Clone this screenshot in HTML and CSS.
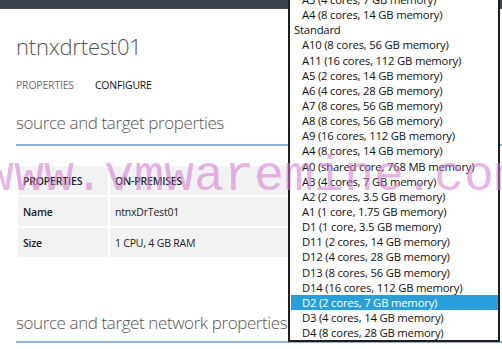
FILE: index.html
```html
<!DOCTYPE html>
<html lang="en">
<head>
  <meta charset="UTF-8" />
  <title>ntnxdrtest01</title>
  <link rel="stylesheet" href="styles.css">
</head>
<body>

  <div class="topbar"></div>

  <div class="page">
    <h1 class="title">ntnxdrtest01</h1>

    <div class="tabs">
      <span class="tab">PROPERTIES</span>
      <span class="tab active">CONFIGURE</span>
    </div>

    <h2 class="section">source and target properties</h2>

    <table class="props">
      <tr>
        <th class="col-name">PROPERTIES</th>
        <th>ON-PREMISES</th>
      </tr>
      <tr>
        <td class="col-name label">Name</td>
        <td>ntnxDrTest01</td>
      </tr>
      <tr>
        <td class="col-name label">Size</td>
        <td>1 CPU, 4 GB RAM</td>
      </tr>
    </table>

    <h2 class="section section-net">source and target network properties</h2>
  </div>

  <div class="dropdown">
    <div class="opt">A3 (4 cores, 7 GB memory)</div>
    <div class="opt">A4 (8 cores, 14 GB memory)</div>
    <div class="group">Standard</div>
    <div class="opt">A10 (8 cores, 56 GB memory)</div>
    <div class="opt">A11 (16 cores, 112 GB memory)</div>
    <div class="opt">A5 (2 cores, 14 GB memory)</div>
    <div class="opt">A6 (4 cores, 28 GB memory)</div>
    <div class="opt">A7 (8 cores, 56 GB memory)</div>
    <div class="opt">A8 (8 cores, 56 GB memory)</div>
    <div class="opt">A9 (16 cores, 112 GB memory)</div>
    <div class="opt">A4 (8 cores, 14 GB memory)</div>
    <div class="opt">A0 (shared core, 768 MB memory)</div>
    <div class="opt">A3 (4 cores, 7 GB memory)</div>
    <div class="opt">A2 (2 cores, 3.5 GB memory)</div>
    <div class="opt">A1 (1 core, 1.75 GB memory)</div>
    <div class="opt">D1 (1 core, 3.5 GB memory)</div>
    <div class="opt">D11 (2 cores, 14 GB memory)</div>
    <div class="opt">D12 (4 cores, 28 GB memory)</div>
    <div class="opt">D13 (8 cores, 56 GB memory)</div>
    <div class="opt">D14 (16 cores, 112 GB memory)</div>
    <div class="opt selected">D2 (2 cores, 7 GB memory)</div>
    <div class="opt">D3 (4 cores, 14 GB memory)</div>
    <div class="opt">D4 (8 cores, 28 GB memory)</div>
  </div>

  <div class="watermark">www.vmwaremine.com</div>

</body>
</html>
```

FILE: styles.css
```css
body {
  margin: 0;
  background: #fff;
  font-family: "Open Sans", "Noto Sans", sans-serif;
  color: #333;
  position: relative;
  overflow: hidden;
  height: 349px;
}
.topbar {
  height: 9px;
  background: #3b434e;
}
.page {
  padding-left: 16px;
}
.title {
  margin: 22px 0 0;
  font-size: 22px;
  font-weight: 300;
  color: #555;
  line-height: 30px;
  letter-spacing: -0.2px;
}
.tabs {
  display: flex;
  gap: 21px;
  margin-top: 17px;
  font-size: 10.5px;
  line-height: 15px;
  letter-spacing: -0.2px;
}
.tab {
  color: #707070;
}
.tab.active {
  color: #111;
}
.section {
  margin: 18px 0 0;
  padding-bottom: 9px;
  font-size: 17px;
  font-weight: 300;
  line-height: 24px;
  letter-spacing: -0.4px;
  color: #555;
  border-bottom: 2px solid #86b2dc;
}
.props {
  margin: 18px 0 0 0;
  border-collapse: separate;
  border-spacing: 2px;
  width: 472px;
  font-size: 10.5px;
  letter-spacing: -0.2px;
}
.props th, .props td {
  background: #f2f2f2;
  height: 29px;
  padding: 0 0 0 5px;
  text-align: left;
  color: #222;
}
.props th {
  font-weight: 600;
}
.props .col-name {
  width: 85px;
}
.props .label {
  font-weight: 600;
}
.section-net {
  margin-top: 52px;
  padding-bottom: 6px;
}
.dropdown {
  position: absolute;
  top: -10px;
  left: 288px;
  width: 207px;
  border: 2px solid #1e1e1e;
  background: #fff;
  padding: 0 0 0 1px;
  font-size: 11.3px;
  letter-spacing: -0.2px;
  color: #111;
}
.dropdown .opt, .dropdown .group {
  height: 15.15px;
  line-height: 15.15px;
  white-space: nowrap;
}
.dropdown .opt {
  padding-left: 11px;
}
.dropdown .group {
  padding-left: 3px;
}
.dropdown .selected {
  background: #289fd8;
  color: #fff;
}
.watermark {
  position: absolute;
  top: 152px;
  left: -16px;
  font-family: "Liberation Mono", monospace;
  font-size: 50px;
  line-height: 50px;
  color: rgba(210, 120, 210, 0.55);
  white-space: nowrap;
  pointer-events: none;
}
```
